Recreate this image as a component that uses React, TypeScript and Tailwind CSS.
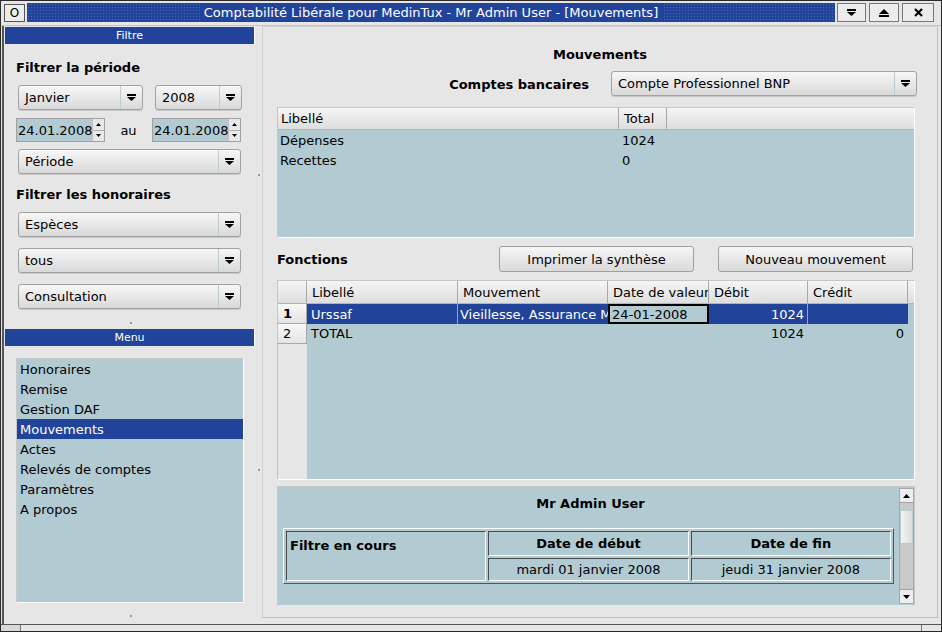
import React from 'react';

const Arrow = () => (
  <svg width="9" height="7" viewBox="0 0 9 7">
    <rect x="0" y="0" width="9" height="2" fill="#000" />
    <polygon points="0,3 9,3 4.5,7" fill="#000" />
  </svg>
);

function Combo({ text, w, h = 25 }: { text: string; w: string; h?: number }) {
  return (
    <div
      className={`${w} flex items-stretch rounded-[3px] border border-[#a2a2a2] bg-gradient-to-b from-[#f7f7f7] to-[#d9d9d9] shadow-[0_1px_0_#c8c8c8]`}
      style={{ height: h }}
    >
      <div className="flex-1 flex items-center pl-[6px] truncate">{text}</div>
      <div className="w-[22px] flex items-center justify-center border-l border-[#b9cdd3]">
        <Arrow />
      </div>
    </div>
  );
}

function Spin() {
  return (
    <div className="w-[89px] h-[24px] flex border border-[#a0a0a0] bg-[#b2cbd2]">
      <div className="flex-1 flex items-center pl-[1px]">24.01.2008</div>
      <div className="w-[12px] flex flex-col bg-[#e8e8e8] border-l border-[#c0c0c0]">
        <div className="flex-1 flex items-center justify-center border-b border-[#b0b0b0]">
          <svg width="5" height="3" viewBox="0 0 5 3"><polygon points="0,3 5,3 2.5,0" fill="#000" /></svg>
        </div>
        <div className="flex-1 flex items-center justify-center">
          <svg width="5" height="3" viewBox="0 0 5 3"><polygon points="0,0 5,0 2.5,3" fill="#000" /></svg>
        </div>
      </div>
    </div>
  );
}

const Header = ({ text }: { text: string }) => (
  <div className="h-[17px] w-[250px] ml-[1px] bg-[#21449a] border-r border-white text-white text-[11px] flex items-center justify-center">
    {text}
  </div>
);

const Grip = () => <div className="w-[2px] h-[2px] bg-[#9a9a9a] mx-auto" />;

function Button({ text, w }: { text: string; w: string }) {
  return (
    <div className={`${w} h-[26px] rounded-[3px] border border-[#a0a0a0] bg-gradient-to-b from-[#f6f6f6] to-[#dadada] flex items-center justify-center`}>
      {text}
    </div>
  );
}

const menuItems = ['Honoraires', 'Remise', 'Gestion DAF', 'Mouvements', 'Actes', 'Relevés de comptes', 'Paramètres', 'A propos'];

const cols = [
  { label: 'Libellé', w: 'w-[151px]' },
  { label: 'Mouvement', w: 'w-[150px]' },
  { label: 'Date de valeur', w: 'w-[101px]' },
  { label: 'Débit', w: 'w-[99px]' },
  { label: 'Crédit', w: 'w-[100px]' },
];

const cell = 'border border-[#4a4a4a] border-r-white border-b-white';

export default function App() {
  return (
    <div className="w-[942px] h-[632px] bg-[#e6e6e6] overflow-hidden flex flex-col border border-[#2a2a2a] font-['DejaVu_Sans',sans-serif] text-[13px] text-black leading-none">
      {/* title bar */}
      <div className="h-[22px] flex items-center gap-[2px] pl-[3px] pr-[7px] pt-[1px] bg-[#e6e6e6]">
        <div className="w-[21px] h-[18px] border border-[#555] bg-[#ececec] flex items-center justify-center text-[12px]">O</div>
        <div className="flex-1 h-[19px] flex items-center bg-[#21449a] bg-[radial-gradient(#4a68b8_0.8px,transparent_0.9px)] bg-size-[3px_3px]">
          <div className="mx-auto bg-[#21449a] px-[4px] h-full flex items-center text-white">
            Comptabilité Libérale pour MedinTux - Mr Admin User - [Mouvements]
          </div>
        </div>
        <div className="flex gap-[3px]">
          <div className="w-[29px] h-[19px] border border-[#777] bg-[#ececec] flex items-center justify-center">
            <Arrow />
          </div>
          <div className="w-[30px] h-[19px] border border-[#777] bg-[#ececec] flex items-center justify-center">
            <svg width="10" height="8" viewBox="0 0 10 8"><polygon points="0,5 10,5 5,0" fill="#000" /><rect x="0" y="6" width="10" height="2" fill="#000" /></svg>
          </div>
          <div className="w-[32px] h-[19px] border border-[#777] bg-[#ececec] flex items-center justify-center">
            <svg width="9" height="9" viewBox="0 0 9 9"><path d="M1 1 L8 8 M8 1 L1 8" stroke="#000" strokeWidth="2.2" /></svg>
          </div>
        </div>
      </div>
      <div className="h-[3px] border-b border-[#c4c4c4]" />

      {/* body */}
      <div className="flex-1 flex pr-[3px] border-l-2 border-[#555] ml-[1px]">
        {/* left panel */}
        <div className="w-[254px] shrink-0 flex flex-col pt-[1px]">
          <Header text="Filtre" />
          <div className="pl-[12px] pt-[17px] font-bold">Filtrer la période</div>
          <div className="flex gap-[12px] pl-[14px] mt-[11px]">
            <Combo text="Janvier" w="w-[125px]" />
            <Combo text="2008" w="w-[87px]" />
          </div>
          <div className="flex items-center pl-[12px] mt-[8px]">
            <Spin />
            <div className="w-[47px] text-center">au</div>
            <Spin />
          </div>
          <div className="pl-[14px] mt-[7px]">
            <Combo text="Période" w="w-[223px]" />
          </div>
          <div className="pl-[12px] mt-[14px] font-bold">Filtrer les honoraires</div>
          <div className="pl-[14px] mt-[11px] flex flex-col gap-[11px]">
            <Combo text="Espèces" w="w-[223px]" />
            <Combo text="tous" w="w-[223px]" />
            <Combo text="Consultation" w="w-[223px]" />
          </div>
          <div className="mt-[13px] h-[2px]"><Grip /></div>
          <div className="mt-[5px]"><Header text="Menu" /></div>
          <div className="ml-[12px] mt-[12px] w-[228px] h-[245px] bg-[#b2cbd2] border-t border-l border-[#c8c8c8] border-b border-r border-b-white border-r-white">
            {menuItems.map((m) => (
              <div
                key={m}
                className={`h-[20px] flex items-center pl-[3px] ${m === 'Mouvements' ? 'bg-[#21449a] text-white' : ''}`}
              >
                {m}
              </div>
            ))}
          </div>
          <div className="mt-[12px]"><Grip /></div>
        </div>

        {/* splitter */}
        <div className="w-[4px] shrink-0 flex flex-col">
          <div className="h-[148px]" />
          <div className="w-[2px] h-[2px] bg-[#9a9a9a]" />
          <div className="h-[293px]" />
          <div className="w-[2px] h-[2px] bg-[#9a9a9a]" />
        </div>

        {/* right panel */}
        <div className="flex-1 min-w-0 mb-[6px] border border-t-[#d0d0d0] border-l-[#d0d0d0] border-r-[#bdbdbd] border-b-[#bdbdbd] flex flex-col pl-[14px] pr-[22px]">
          <div className="text-center font-bold pt-[21px] pl-[8px]">Mouvements</div>
          <div className="flex items-center mt-[10px]">
            <div className="w-[312px] shrink-0 text-right font-bold pt-[2px]">Comptes bancaires</div>
            <div className="ml-[22px] shrink-0">
              <Combo text="Compte Professionnel BNP" w="w-[306px]" />
            </div>
          </div>

          {/* table 1 */}
          <div className="mt-[11px] h-[131px] border border-[#c6c6c6] border-b-white border-r-white bg-[#b2cbd2] flex flex-col">
            <div className="h-[22px] flex bg-gradient-to-b from-[#f5f5f5] to-[#dedede] border-b border-[#b4b4b4]">
              <div className="w-[341px] border-r border-[#a8a8a8] flex items-center pl-[3px]">Libellé</div>
              <div className="w-[48px] border-r border-[#a8a8a8] flex items-center pl-[5px]">Total</div>
              <div className="flex-1" />
            </div>
            <div className="flex h-[20px] items-center"><div className="w-[341px] pl-[2px]">Dépenses</div><div className="pl-[3px]">1024</div></div>
            <div className="flex h-[20px] items-center"><div className="w-[341px] pl-[2px]">Recettes</div><div className="pl-[3px]">0</div></div>
          </div>

          {/* fonctions */}
          <div className="flex items-center mt-[8px] h-[26px]">
            <div className="font-bold w-[222px] shrink-0">Fonctions</div>
            <Button text="Imprimer la synthèse" w="w-[195px] shrink-0" />
            <div className="w-[24px] shrink-0" />
            <Button text="Nouveau mouvement" w="w-[195px] shrink-0" />
          </div>

          {/* table 2 */}
          <div className="mt-[8px] h-[200px] border border-[#c6c6c6] border-b-white border-r-white bg-[#b2cbd2] flex flex-col">
            <div className="h-[23px] flex bg-gradient-to-b from-[#f5f5f5] to-[#dedede] border-b border-[#b4b4b4]">
              <div className="w-[29px] border-r border-[#a8a8a8]" />
              {cols.map((c) => (
                <div key={c.label} className={`${c.w} border-r border-[#a8a8a8] flex items-center pl-[5px] whitespace-nowrap overflow-hidden`}>
                  {c.label}
                </div>
              ))}
            </div>
            <div className="flex h-[20px]">
              <div className="w-[29px] flex items-center pl-[5px] font-bold bg-gradient-to-b from-[#f8f8f8] to-[#e4e4e4] border-r border-b border-[#a8a8a8]">1</div>
              <div className="w-[151px] flex items-center pl-[4px] bg-[#21449a] text-white border-r border-[#8ea8c0]">Urssaf</div>
              <div className="w-[150px] overflow-hidden bg-[#21449a] text-white">
                <div className="h-full flex items-center pl-[2px] whitespace-nowrap">Vieillesse, Assurance Maladie</div>
              </div>
              <div className="w-[101px] flex items-center pl-[2px] bg-[#b2cbd2] border-2 border-black">24-01-2008</div>
              <div className="w-[99px] flex items-center justify-end pr-[3px] bg-[#21449a] text-white border-r border-[#8ea8c0]">1024</div>
              <div className="w-[100px] bg-[#21449a]" />
            </div>
            <div className="flex h-[20px]">
              <div className="w-[29px] flex items-center pl-[5px] bg-gradient-to-b from-[#f8f8f8] to-[#e4e4e4] border-r border-b border-[#a8a8a8]">2</div>
              <div className="w-[151px] flex items-center pl-[4px] border-r border-b border-[#c4c4c4]">TOTAL</div>
              <div className="w-[150px] border-r border-b border-[#c4c4c4]" />
              <div className="w-[101px] border-r border-b border-[#c4c4c4]" />
              <div className="w-[99px] flex items-center justify-end pr-[3px] border-r border-b border-[#c4c4c4]">1024</div>
              <div className="w-[100px] flex items-center justify-end pr-[3px] border-r border-b border-[#c4c4c4]">0</div>
            </div>
            <div className="flex-1 flex">
              <div className="w-[29px] bg-[#e6e6e6]" />
              <div className="flex-1" />
            </div>
          </div>

          {/* bottom report */}
          <div className="mt-[6px] h-[120px] border border-[#c6c6c6] border-b-[#e6e6e6] bg-[#b2cbd2] flex">
            <div className="flex-1 flex flex-col px-[5px]">
              <div className="text-center font-bold pt-[10px] pl-[4px]">Mr Admin User</div>
              <table className="mt-[18px] w-full table-fixed border-separate border-spacing-[2px] border border-t-white border-l-white border-r-[#555] border-b-[#555]">
                <tbody>
                  <tr>
                    <td rowSpan={2} className={`align-top font-bold pl-[3px] pt-[7px] ${cell}`}>Filtre en cours</td>
                    <td className={`h-[25px] text-center font-bold ${cell}`}>Date de début</td>
                    <td className={`h-[25px] text-center font-bold ${cell}`}>Date de fin</td>
                  </tr>
                  <tr>
                    <td className={`h-[23px] text-center ${cell}`}>mardi 01 janvier 2008</td>
                    <td className={`h-[23px] text-center ${cell}`}>jeudi 31 janvier 2008</td>
                  </tr>
                </tbody>
              </table>
            </div>
            <div className="w-[15px] my-[1px] flex flex-col bg-[#c9c9c9] border border-[#a8a8a8]">
              <div className="h-[14px] bg-[#eeeeee] border-b border-[#a0a0a0] flex items-center justify-center">
                <svg width="7" height="4" viewBox="0 0 7 4"><polygon points="0,4 7,4 3.5,0" fill="#000" /></svg>
              </div>
              <div className="h-[7px]" />
              <div className="h-[34px] bg-gradient-to-r from-[#f4f4f4] to-[#dcdcdc] border border-[#b8ccd2]" />
              <div className="flex-1" />
              <div className="h-[14px] bg-[#eeeeee] border-t border-[#a0a0a0] flex items-center justify-center">
                <svg width="7" height="4" viewBox="0 0 7 4"><polygon points="0,0 7,0 3.5,4" fill="#000" /></svg>
              </div>
            </div>
          </div>
        </div>
      </div>

      {/* status bar */}
      <div className="h-[7px] border-t border-[#555] flex">
        <div className="w-[20px] border-r border-[#777] bg-[#d8d8d8]" />
        <div className="flex-1" />
        <div className="w-[20px] border-l border-[#777]" />
      </div>
    </div>
  );
}
